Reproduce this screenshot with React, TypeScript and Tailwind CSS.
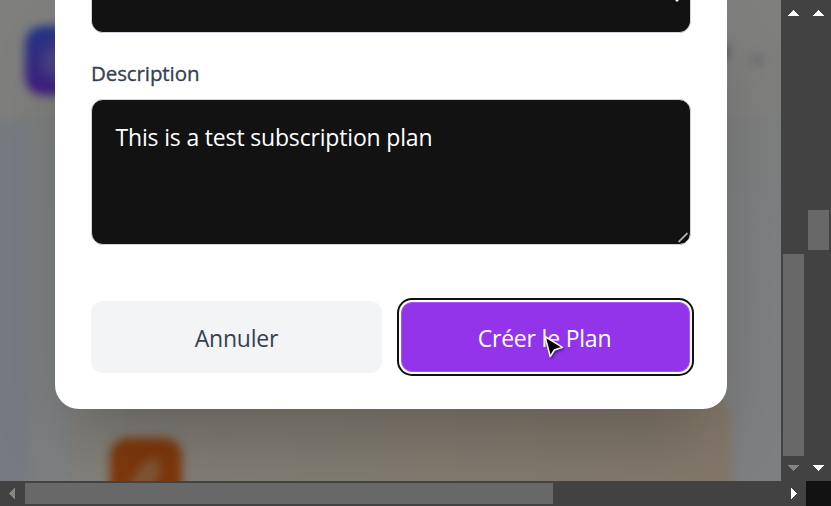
import React from "react";

type Direction = "up" | "down" | "left" | "right";

const arrowPoints: Record<Direction, string> = {
  up: "0,6 5.5,0 11,6",
  down: "0,0 5.5,6 11,0",
  left: "6,0 0,5.5 6,11",
  right: "0,0 6,5.5 0,11",
};

function Arrow({ direction, muted = false }: { direction: Direction; muted?: boolean }) {
  const vertical = direction === "up" || direction === "down";
  return (
    <svg
      width={vertical ? 11 : 6}
      height={vertical ? 6 : 11}
      className={`shrink-0 ${muted ? "fill-[#858585]" : "fill-white"}`}
      shapeRendering="crispEdges"
    >
      <polygon points={arrowPoints[direction]} />
    </svg>
  );
}

function Backdrop() {
  return (
    <div className="absolute inset-0 bg-linear-to-b from-[#7c7f7e] to-[#7d7f81]">
      <div className="absolute inset-x-0 top-0 h-[118px] bg-[#7f7f7e] blur-[3px]" />
      <div className="absolute -bottom-10 -left-4 top-[122px] w-11 bg-[#777a80] blur-[6px]" />
      <div className="absolute -bottom-10 left-[72px] top-[396px] w-[660px] rounded-[24px] bg-linear-to-r from-[#817f79] to-[#827769] blur-[5px]" />
      <div className="absolute left-[25px] top-[26px] h-[69px] w-[72px] rounded-[18px] bg-linear-to-b from-[#1f3687] to-[#431c83] blur-[5px]" />
      <div className="absolute left-[42px] top-[44px] h-9 w-9 rounded-full bg-[#4c4484] blur-[7px]" />
      <div className="absolute left-[110px] top-[438px] h-[90px] w-[72px] rounded-[18px] bg-[#7e390c] blur-[5px]" />
      <svg className="absolute left-[122px] top-[450px] blur-[4px]" width="48" height="40">
        <path d="M8 34 20 14 36 6 38 24 28 40H8Z" fill="#805536" />
      </svg>
      <div className="absolute left-[714px] top-[46px] h-[12px] w-[14px] bg-[#4e5150] blur-[5px]" />
      <div className="absolute left-[750px] top-[55px] h-[10px] w-[16px] rounded-full bg-[#6c7072] blur-[5px]" />
    </div>
  );
}

function PlanDialog() {
  return (
    <section className="relative ml-[55px] h-[409px] w-[672px] rounded-b-[24px] bg-white px-9 shadow-[0_37px_75px_-18px_rgba(0,0,0,0.26)]">
      <div className="relative h-[33px] w-[600px] rounded-b-[12px] border border-t-0 border-[#d1d5db] bg-[#121212]">
        <svg className="absolute right-[9px] top-0" width="8" height="2">
          <path d="M2 0h4L4 2Z" fill="#fff" />
        </svg>
      </div>
      <label
        htmlFor="description"
        className="mt-[25px] block h-[30px] text-[20.5px] font-medium leading-[30px] tracking-[-0.1px] text-[#374151] [-webkit-text-stroke:0.35px_#374151]"
      >
        Description
      </label>
      <div className="relative mt-[11px] h-[146px] w-[600px]">
        <textarea
          id="description"
          readOnly
          defaultValue="This is a test subscription plan"
          className="block h-full w-full resize-none overflow-hidden rounded-[12px] border border-[#d1d5db] bg-[#121212] px-[23.5px] py-[19px] text-[23px] leading-[36px] tracking-[-0.17px] text-white outline-none"
        />
        <svg className="absolute bottom-px right-px" width="13" height="13" fill="none">
          <path d="m1.5 11 9-9" stroke="#000" strokeWidth="4" />
          <path d="m1.5 11 9-9" stroke="#aaa" strokeWidth="1.9" />
          <path d="m6.5 11.5 4.5-4.5" stroke="#000" strokeWidth="1.6" />
        </svg>
      </div>
      <div className="mt-14 flex gap-[19px]">
        <button className="h-[72px] w-[291px] rounded-[12px] bg-[#f3f4f6] text-[23px] tracking-[-0.2px] text-[#374151]">
          <span className="relative top-px">Annuler</span>
        </button>
        <button className="mt-px h-[70px] w-[289px] rounded-[11px] border border-[#a855f7] bg-[#9333ea] text-[23px] tracking-[-0.2px] text-white shadow-[0_0_0_2px_#fff,0_0_0_4px_#101010]">
          <span className="relative -left-px top-px">Créer le Plan</span>
        </button>
      </div>
      <svg className="absolute left-[487px] top-[333px]" width="25" height="30" viewBox="0 0 25 30">
        <path
          d="M3 3.5 8.2 23.5 12.4 17 20.5 14.3Z"
          fill="#000"
          stroke="#fff"
          strokeWidth="1.5"
          strokeLinejoin="round"
          className="drop-shadow-[1px_2px_1px_rgba(0,0,0,0.4)]"
        />
      </svg>
    </section>
  );
}

export default function App() {
  return (
    <div className="flex h-[506px] w-[831px] overflow-hidden bg-[#424242] font-['Open_Sans','Noto_Sans',sans-serif]">
      <div className="flex w-[806px] flex-col">
        <div className="flex h-[481px]">
          <main className="relative w-[781px] overflow-hidden">
            <Backdrop />
            <PlanDialog />
          </main>
          <div className="flex w-[25px] flex-col items-center pt-[10px]">
            <Arrow direction="up" />
            <div className="mt-[238px] h-[202px] w-[21px] bg-[#686868]" />
            <div className="mt-[9px]">
              <Arrow direction="down" muted />
            </div>
          </div>
        </div>
        <div className="flex h-[25px] items-center pl-[9px]">
          <Arrow direction="left" muted />
          <div className="ml-[10px] h-[21px] w-[528px] bg-[#686868]" />
          <div className="ml-[238px]">
            <Arrow direction="right" />
          </div>
        </div>
      </div>
      <div className="flex w-[25px] flex-col items-center pt-[10px]">
        <Arrow direction="up" />
        <div className="mt-[194px] h-10 w-[21px] bg-[#686868]" />
        <div className="mt-[215px] h-[16px]">
          <Arrow direction="down" />
        </div>
        <div className="h-[25px] w-full bg-[#121212]" />
      </div>
    </div>
  );
}
